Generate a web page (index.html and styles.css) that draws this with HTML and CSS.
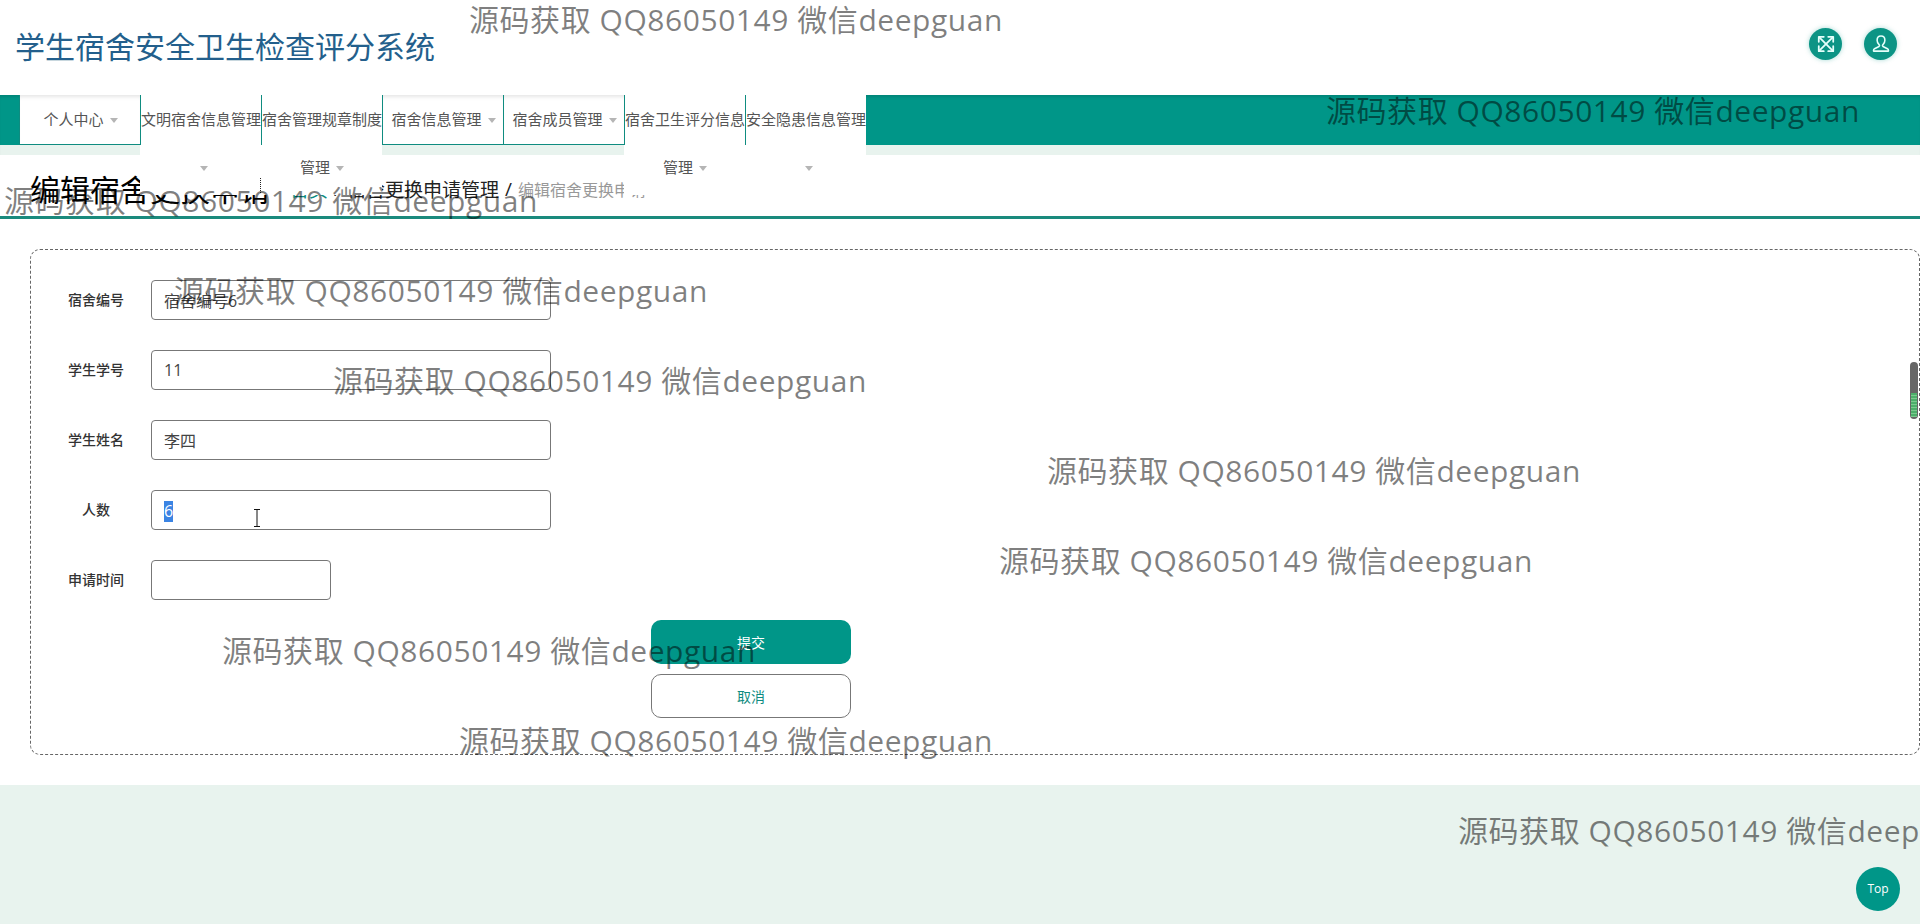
FILE: index.html
```html
<!DOCTYPE html>
<html lang="zh-CN">
<head>
<meta charset="utf-8">
<title>学生宿舍安全卫生检查评分系统</title>
<link rel="stylesheet" href="styles.css">
</head>
<body>
<div class="page">
  <header class="header">
    <h1 class="brand">学生宿舍安全卫生检查评分系统</h1>
    <div class="header-actions">
      <a class="round-btn" href="#" aria-label="全屏">
        <svg viewBox="0 0 18 18" width="20" height="20" fill="none" stroke="#e6fffb" stroke-width="1.6" stroke-linecap="round" stroke-linejoin="round"><path d="M3 3l12 12M15 3L3 15"/><path d="M2.500 7V2.500H7M11 2.500h4.500V7M15.500 11v4.500H11M7 15.500H2.500V11"/></svg>
      </a>
      <a class="round-btn" href="#" aria-label="用户">
        <svg viewBox="0 0 18 18" width="20" height="20" fill="none" stroke="#e6fffb" stroke-width="1.400" stroke-linejoin="round"><path d="M9 1.800c2.200 0 3.500 1.700 3.500 3.800 0 1.800-.9 3.300-1.900 4.200-.4.400-.3 1.100.2 1.400l4 2.100c.6.300.9.800.9 1.400v.7H2.300v-.7c0-.6.300-1.100.9-1.400l4-2.100c.5-.3.600-1 .2-1.400-1-.9-1.900-2.400-1.900-4.200 0-2.100 1.300-3.800 3.500-3.800z"/></svg>
      </a>
    </div>
  </header>

  <nav class="nav-bar">
    <ul class="nav">
      <li class="nav-item">个人中心<i class="caret"></i></li>
      <li class="nav-item tall">文明宿舍信息管理<i class="caret"></i></li>
      <li class="nav-item tall dotted">宿舍管理规章制度管理<i class="caret"></i></li>
      <li class="nav-item">宿舍信息管理<i class="caret"></i></li>
      <li class="nav-item">宿舍成员管理<i class="caret"></i></li>
      <li class="nav-item tall">宿舍卫生评分信息管理<i class="caret"></i></li>
      <li class="nav-item tall">安全隐患信息管理<i class="caret"></i></li>
    </ul>
  </nav>

  <section class="crumb-bar">
    <h2 class="page-title">编辑宿舍更换申请</h2>
    <div class="crumbs">
      <a class="crumb-home" href="#">首页</a>
      <span class="crumb-sep">/</span>
      <span>宿舍更换申请管理</span>
      <span class="crumb-sep">/</span>
      <span class="crumb-current">编辑宿舍更换申请</span>
    </div>
  </section>

  <main class="main">
    <form class="card">
      <div class="row"><label class="label">宿舍编号</label><input class="field" value="宿舍编号6"></div>
      <div class="row"><label class="label">学生学号</label><input class="field" value="11"></div>
      <div class="row"><label class="label">学生姓名</label><input class="field" value="李四"></div>
      <div class="row">
        <label class="label">人数</label>
        <div class="field field-selected"><span class="selection">6</span>
          <svg class="ibeam" viewBox="0 0 8 18" width="8" height="18" fill="none" stroke="#111" stroke-width="1"><path d="M1 .5h6M4 .5v17M1 17.500h6"/></svg>
        </div>
      </div>
      <div class="row row-last"><label class="label">申请时间</label><input class="field field-date"></div>
      <div class="actions">
        <button class="btn btn-primary" type="button">提交</button>
        <button class="btn btn-ghost" type="button">取消</button>
      </div>
    </form>
  </main>

  <footer class="footer"></footer>

  <a class="top-btn" href="#">Top</a>
  <div class="scroll-thumb"><span class="scroll-fill"></span></div>

  <div class="wm wm1">源码获取 QQ86050149 微信deepguan</div>
  <div class="wm wm2">源码获取 QQ86050149 微信deepguan</div>
  <div class="wm wm3">源码获取 QQ86050149 微信deepguan</div>
  <div class="wm wm4">源码获取 QQ86050149 微信deepguan</div>
  <div class="wm wm5">源码获取 QQ86050149 微信deepguan</div>
  <div class="wm wm6">源码获取 QQ86050149 微信deepguan</div>
  <div class="wm wm7">源码获取 QQ86050149 微信deepguan</div>
  <div class="wm wm8">源码获取 QQ86050149 微信deepguan</div>
  <div class="wm wm9">源码获取 QQ86050149 微信deepguan</div>
  <div class="wm wm10">源码获取 QQ86050149 微信deepguan</div>
</div>
</body>
</html>
```
FILE: styles.css
```css
* { box-sizing: border-box; }
html, body { margin: 0; padding: 0; }
body {
  font-family: "Open Sans", "Noto Sans CJK SC", sans-serif;
  background: #fff;
  color: #333;
}
.page {
  position: relative;
  width: 1920px;
  height: 924px;
  overflow: hidden;
  display: flex;
  flex-direction: column;
}

/* header */
.header {
  height: 95px;
  flex: none;
  display: flex;
  align-items: center;
  justify-content: space-between;
  padding: 0 23px 0 15px;
}
.brand {
  margin: 0 0 2px;
  font-size: 30px;
  font-weight: 400;
  line-height: 40px;
  color: #235f8c;
}
.header-actions {
  display: flex;
  gap: 22px;
  margin-bottom: 7px;
}
.round-btn {
  width: 33px;
  height: 32px;
  border-radius: 50%;
  background: #0c9485;
  box-shadow: 0 0 5px rgba(0, 150, 136, .35);
  display: flex;
  align-items: center;
  justify-content: center;
}

/* nav */
.nav-bar {
  flex: none;
  height: 60px;
  background: linear-gradient(#009688 0 50px, #e8f3ee 50px);
  box-shadow: inset 0 4px 4px -3px rgba(0, 0, 0, .18);
  position: relative;
  z-index: 2;
}
.nav {
  list-style: none;
  margin: 0;
  padding: 0 0 0 19px;
  display: flex;
  align-items: flex-start;
}
.nav-item {
  position: relative;
  width: 121px;
  height: 50px;
  padding: 0 0 0 1px;
  background: #fff;
  border-left: 1px solid #0f8c80;
  border-bottom: 1px solid #0f8c80;
  box-shadow: inset 0 5px 5px -4px rgba(0, 0, 0, .14);
  font-size: 15px;
  line-height: 48px;
  color: #555;
  text-align: center;
}
.nav-item.tall {
  height: 100px;
  border-left: 0;
  border-bottom: 0;
  box-shadow: none;
}
.nav-item.tall::before {
  content: "";
  position: absolute;
  left: 0;
  top: 0;
  height: 50px;
  border-left: 1px solid #0f8c80;
}
.nav-item.dotted::after {
  content: "";
  position: absolute;
  left: -1px;
  top: 83px;
  height: 15px;
  border-left: 1px dotted #222;
}
.caret {
  display: inline-block;
  width: 0;
  height: 0;
  margin-left: 6px;
  vertical-align: middle;
  border-left: 4px solid transparent;
  border-right: 4px solid transparent;
  border-top: 5px solid #b5b5b5;
}

/* breadcrumb strip */
.crumb-bar {
  flex: none;
  height: 64px;
  padding: 9px 0 0 30px;
  border-bottom: 3px solid #1a8a7d;
  display: flex;
  align-items: center;
  gap: 20px;
  white-space: nowrap;
  position: relative;
  z-index: 1;
}
.page-title {
  margin: 0;
  font-size: 30px;
  font-weight: 400;
  line-height: 40px;
  color: #000;
}
.crumbs {
  display: flex;
  align-items: center;
  gap: 6px;
  margin-top: -3px;
  font-size: 19px;
  color: #222;
}
.crumb-home { color: #0f8c80; text-decoration: none; }
.crumb-current { font-size: 16px; color: #999; }

/* form */
.main {
  flex: none;
  padding: 30px 0 30px 30px;
}
.card {
  width: 1890px;
  height: 506px;
  margin: 0;
  padding: 30px 0 0 10px;
  border: 1px dashed #666;
  border-radius: 10px;
}
.row {
  display: flex;
  align-items: center;
  margin-bottom: 30px;
}
.row-last { margin-bottom: 20px; }
.label {
  width: 110px;
  flex: none;
  padding-bottom: 2px;
  text-align: center;
  font-size: 14px;
  font-weight: 500;
  color: #333;
}
.field {
  display: block;
  width: 400px;
  height: 40px;
  margin: 0;
  padding: 0 12px;
  border: 1px solid #777;
  border-radius: 4px;
  background: #fff;
  font: inherit;
  font-size: 16px;
  color: #444;
  outline: 0;
}
.field-selected {
  position: relative;
  line-height: 38px;
}
.selection {
  background: #3b84e3;
  color: #fff;
  display: inline-block;
  vertical-align: middle;
  line-height: 21px;
}
.ibeam {
  position: absolute;
  left: 101px;
  top: 18px;
}
.field-date { width: 180px; }
.actions {
  display: flex;
  flex-direction: column;
  gap: 10px;
  padding-left: 610px;
}
.btn {
  display: block;
  width: 200px;
  height: 44px;
  border-radius: 10px;
  font: inherit;
  font-size: 14px;
}
.btn-primary { background: #009688; border: 0; color: #fff; }
.btn-ghost { background: #fff; border: 1px solid #777; color: #0f8c80; }

/* footer */
.footer {
  flex: 1;
  background: #e8f3ee;
}

/* floating */
.top-btn {
  position: absolute;
  left: 1856px;
  top: 867px;
  width: 44px;
  height: 44px;
  border-radius: 50%;
  background: #009688;
  color: #fff;
  font-size: 12px;
  line-height: 44px;
  text-align: center;
  text-decoration: none;
}
.scroll-thumb {
  position: absolute;
  left: 1910px;
  top: 362px;
  width: 8px;
  height: 57px;
  border-radius: 4px;
  background: #666;
  overflow: hidden;
}
.scroll-fill {
  position: absolute;
  left: 1px;
  right: 1px;
  top: 31px;
  bottom: 2px;
  background: repeating-linear-gradient(#4caf6a 0 2px, #7cc98f 2px 3px);
}

/* watermarks */
.wm {
  position: absolute;
  z-index: 5;
  font-size: 30px;
  line-height: 40px;
  letter-spacing: .55px;
  white-space: nowrap;
  color: rgba(0, 0, 0, .5);
  pointer-events: none;
}
.wm1 { left: 469px; top: 0; }
.wm2 { left: 1326px; top: 91px; }
.wm3 { left: 4px; top: 181px; }
.wm4 { left: 174px; top: 271px; }
.wm5 { left: 333px; top: 361px; }
.wm6 { left: 1047px; top: 451px; }
.wm7 { left: 999px; top: 541px; }
.wm8 { left: 222px; top: 631px; }
.wm9 { left: 459px; top: 721px; }
.wm10 { left: 1458px; top: 811px; }
```
